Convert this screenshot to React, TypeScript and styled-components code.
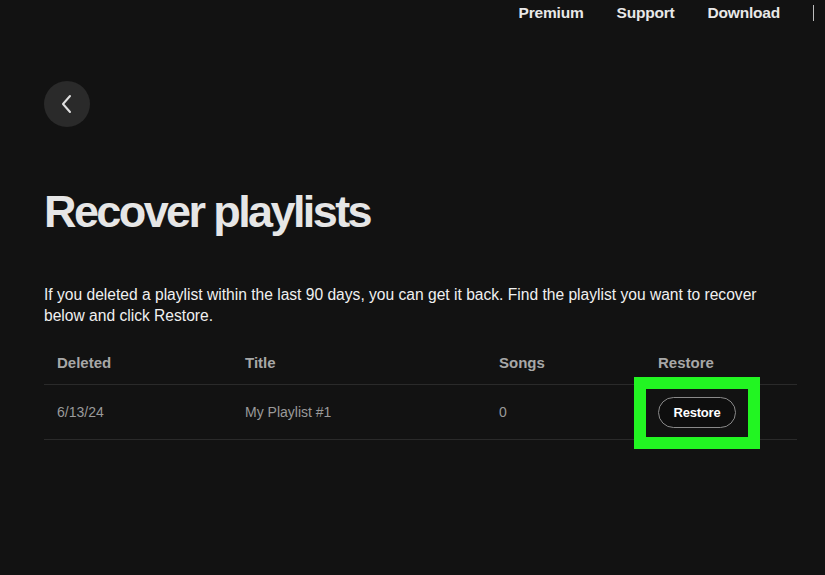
import React from 'react'
import styled, { createGlobalStyle } from 'styled-components'

const GlobalStyle = createGlobalStyle`
  html, body {
    margin: 0;
    padding: 0;
    background: #121212;
  }
  body {
    font-family: "Liberation Sans", Arial, sans-serif;
    color: #ffffff;
    width: 825px;
    height: 575px;
    overflow: hidden;
  }
`

const Page = styled.div`
  width: 825px;
  height: 575px;
  background: #121212;
  display: flex;
  flex-direction: column;
`

const TopBar = styled.header`
  height: 26px;
  display: flex;
  justify-content: flex-end;
  align-items: center;
  padding-right: 11px;
`

const NavLink = styled.a`
  font-size: 15.5px;
  font-weight: 700;
  color: #e8e8e8;
  margin-left: 33px;
  letter-spacing: -0.2px;
  cursor: pointer;
`

const NavDivider = styled.span`
  width: 1px;
  height: 16px;
  background: #bdbdbd;
  margin-left: 33px;
`

const Main = styled.main`
  padding: 0 28px 0 44px;
  display: flex;
  flex-direction: column;
`

const BackButton = styled.button`
  margin-top: 55px;
  width: 46px;
  height: 46px;
  border-radius: 50%;
  border: none;
  background: #2a2a2a;
  display: flex;
  align-items: center;
  justify-content: center;
  padding: 0;
  cursor: pointer;
`

const Title = styled.h1`
  margin: 56px 0 0 0;
  font-size: 45px;
  line-height: 58px;
  font-weight: 700;
  letter-spacing: -2.6px;
  color: #e6e6e6;
`

const Description = styled.p`
  margin: 43px 0 0 0;
  font-size: 15.6px;
  line-height: 21px;
  color: #f0f0f0;
  max-width: 740px;
`

const Table = styled.div`
  margin-top: 14px;
  display: flex;
  flex-direction: column;
`

const Row = styled.div<{ $header?: boolean }>`
  display: grid;
  grid-template-columns: 188px 254px 159px 1fr;
  align-items: center;
  height: ${p => (p.$header ? '44px' : '54px')};
  border-bottom: 1px solid #2a2a2a;
`

const Cell = styled.div<{ $header?: boolean }>`
  padding-left: 13px;
  font-size: ${p => (p.$header ? '15px' : '14px')};
  font-weight: ${p => (p.$header ? 700 : 400)};
  color: ${p => (p.$header ? '#a7a7a7' : '#9a9a9a')};
`

const HighlightWrap = styled.div`
  position: relative;
  display: inline-block;
`

const Highlight = styled.span`
  position: absolute;
  top: -20px;
  bottom: -21px;
  left: -24px;
  right: -24px;
  border: 12px solid #22f522;
  pointer-events: none;
`

const RestoreButton = styled.button`
  height: 31px;
  width: 78px;
  border-radius: 16px;
  border: 1px solid #8a8a8a;
  background: #0e0e0e;
  color: #ffffff;
  font-family: "Liberation Sans", Arial, sans-serif;
  font-size: 13px;
  font-weight: 700;
  letter-spacing: -0.2px;
  cursor: pointer;
`

const RestoreCell = styled.div`
  padding-left: 13px;
  display: flex;
  align-items: center;
`

export default function App() {
  return (
    <Page>
      <GlobalStyle />
      <TopBar>
        <NavLink>Premium</NavLink>
        <NavLink>Support</NavLink>
        <NavLink>Download</NavLink>
        <NavDivider />
      </TopBar>
      <Main>
        <BackButton aria-label="Back">
          <svg width="16" height="20" viewBox="0 0 16 20" fill="none">
            <path d="M11 2 L4 10 L11 18" stroke="#e0e0e0" strokeWidth="2" strokeLinecap="round" strokeLinejoin="round" />
          </svg>
        </BackButton>
        <Title>Recover playlists</Title>
        <Description>
          If you deleted a playlist within the last 90 days, you can get it back. Find the playlist you want to recover below and click Restore.
        </Description>
        <Table>
          <Row $header>
            <Cell $header>Deleted</Cell>
            <Cell $header>Title</Cell>
            <Cell $header>Songs</Cell>
            <Cell $header>Restore</Cell>
          </Row>
          <Row>
            <Cell>6/13/24</Cell>
            <Cell>My Playlist #1</Cell>
            <Cell>0</Cell>
            <RestoreCell>
              <HighlightWrap>
                <RestoreButton>Restore</RestoreButton>
                <Highlight />
              </HighlightWrap>
            </RestoreCell>
          </Row>
        </Table>
      </Main>
    </Page>
  )
}
